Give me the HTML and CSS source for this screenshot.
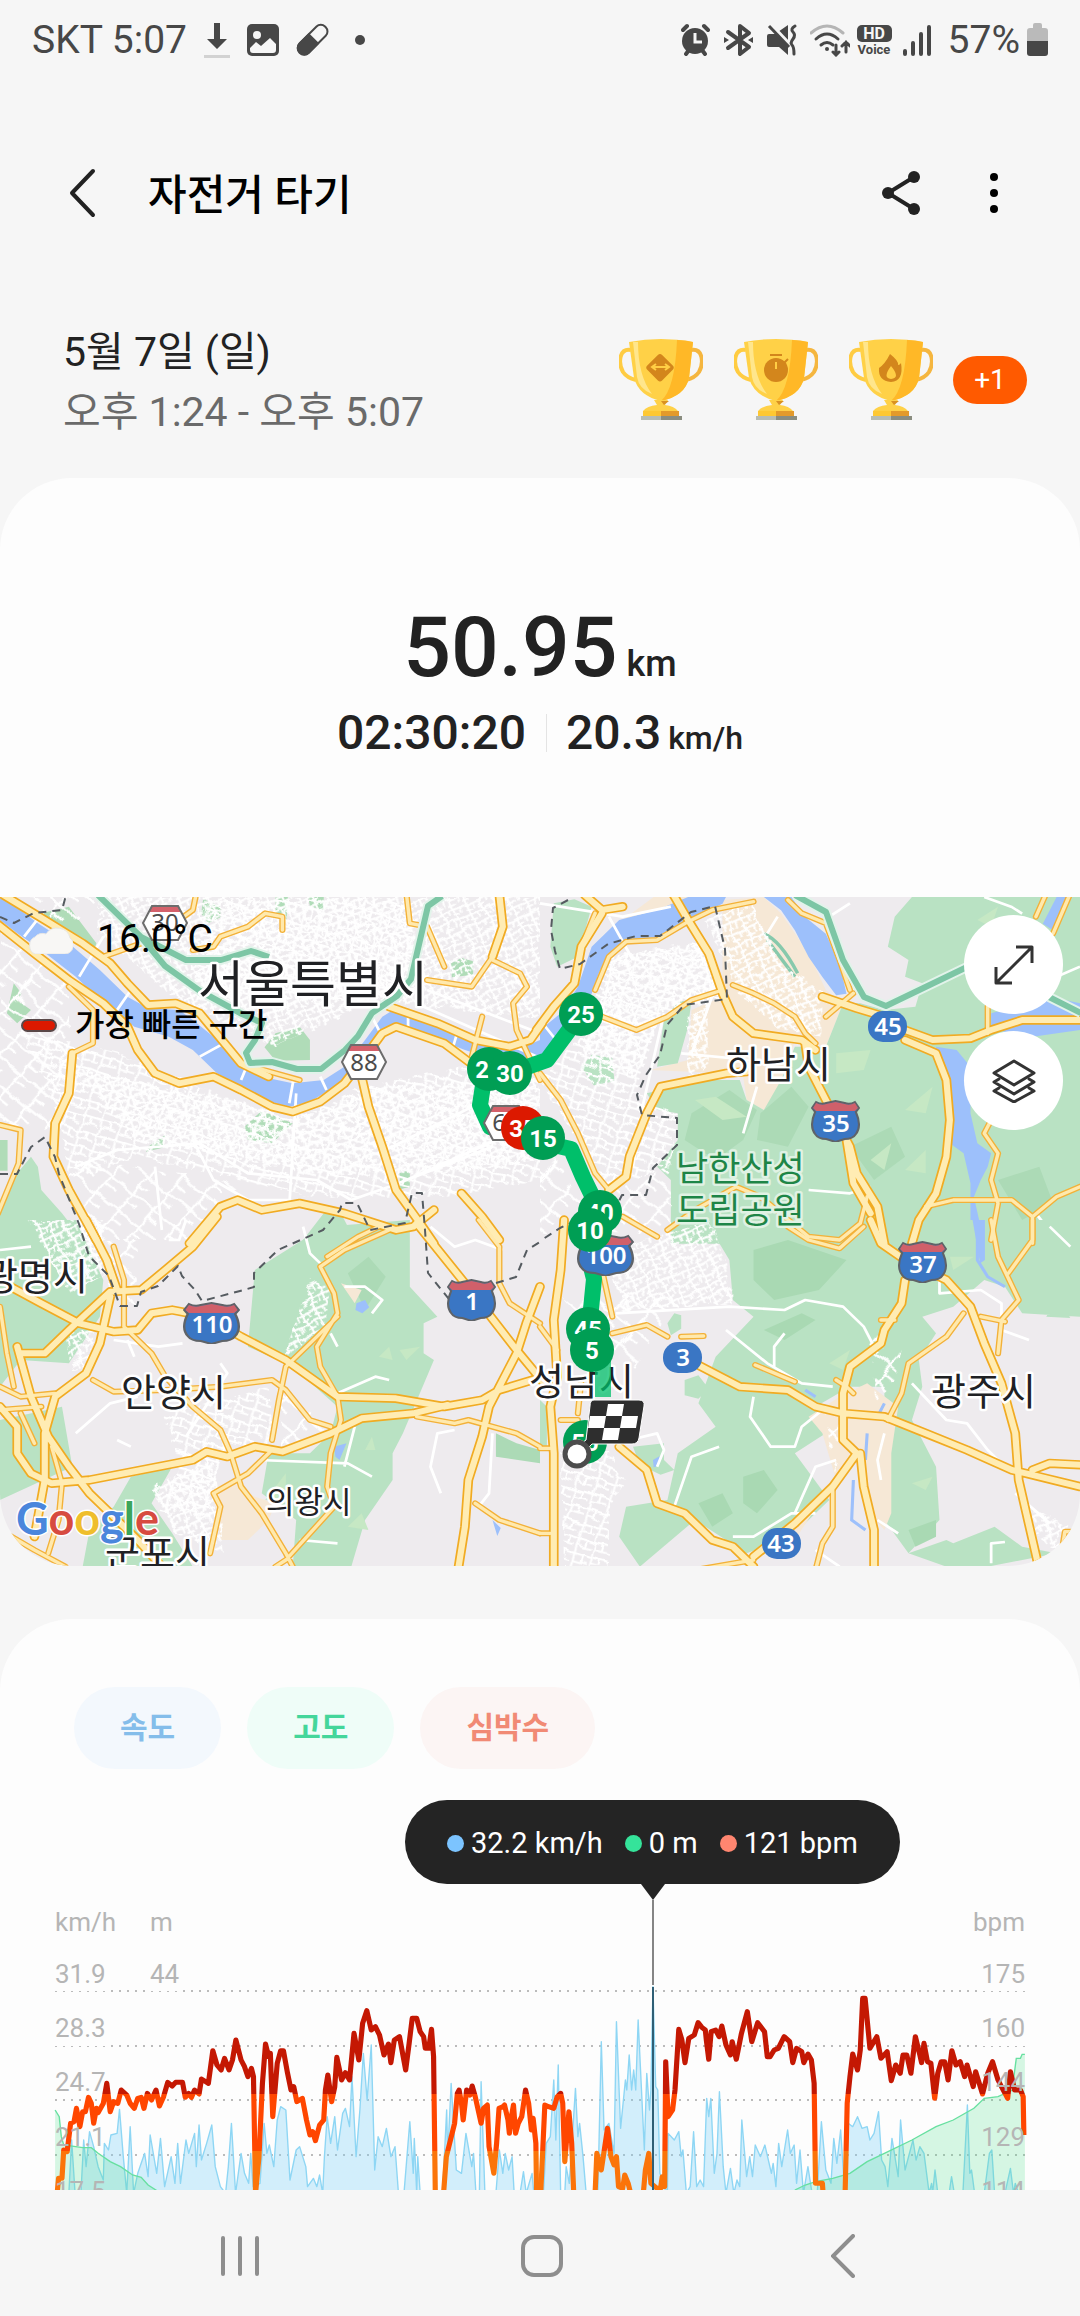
FILE: index.html
```html
<!DOCTYPE html>
<html lang="ko">
<head>
<meta charset="utf-8">
<meta name="viewport" content="width=device-width, initial-scale=1">
<title>자전거 타기</title>
<link rel="stylesheet" href="styles.css">
</head>
<body>
<div class="statusbar">
  <div class="status-group status-left">
    <span>SKT 5:07</span>
    <svg width="26" height="36" viewBox="0 0 26 36"><path d="M10 1h6v16h7L13 27 3 17h7z" fill="#474747"/><path d="M0 33h26v3H0z" fill="#d2d2d2"/></svg>
    <svg width="32" height="32" viewBox="0 0 32 32"><rect width="32" height="32" rx="5" fill="#474747"/><circle cx="10" cy="11" r="4" fill="#f6f6f6"/><path d="M3 24l6-6 5 4 9-8 6 6v6q0 3-3 3H6q-3 0-3-3z" fill="#f6f6f6"/></svg>
    <svg width="34" height="34" viewBox="0 0 34 34"><g transform="rotate(45 17 17)"><rect x="10" y="-1" width="13" height="36" rx="6" fill="none" stroke="#474747" stroke-width="2"/><path d="M9 15h15v14a7 7 0 0 1-15 0z" fill="#474747"/></g></svg>
    <svg class="more-dot" width="10" height="10" viewBox="0 0 10 10"><circle cx="5" cy="5" r="5" fill="#474747"/></svg>
  </div>
  <div class="status-group status-right">
    <svg width="36" height="34" viewBox="0 0 36 34"><g fill="none" stroke="#474747" stroke-width="4" stroke-linecap="round"><path d="M2 7l4-4M27 7l-4-4M5 31l3-4M24 31l-3-4"/></g><circle cx="14" cy="18" r="13" fill="#474747"/><path d="M14 10v9h7" fill="none" stroke="#f6f6f6" stroke-width="3"/></svg>
    <svg width="36" height="34" viewBox="0 0 36 34"><path d="M4 9l21 15-9 7V3l9 7L4 25" fill="none" stroke="#474747" stroke-width="4" stroke-linejoin="round" stroke-linecap="round"/><path d="M0 14l5 3-5 3zM29 14l-5 3 5 3z" fill="#474747"/></svg>
    <svg width="36" height="34" viewBox="0 0 36 34"><path d="M0 13q0-2 2-2h6L21 2v30l-9-8H2q-2 0-2-2z" fill="#474747"/><path d="M4 2l20 21" stroke="#f6f6f6" stroke-width="4"/><path d="M2 3l20 21" stroke="#474747" stroke-width="3"/><path d="M28 3q-5 3-2 6t0 7-1 6 2 9" fill="none" stroke="#474747" stroke-width="3" stroke-linecap="round"/></svg>
    <svg width="40" height="34" viewBox="0 0 40 34"><g fill="none" stroke="#474747" stroke-width="3" stroke-linecap="round"><path d="M1 10q16-14 32 0" stroke="#b5b5b5"/><path d="M6 16q11-10 22 0M11 22q6-5 12 0"/><path d="M26 22v10m-3-3l3 3 3-3M36 29V19m-4 4l4-4 4 4"/></g><circle cx="17" cy="26" r="2" fill="#474747"/></svg>
    <svg width="35" height="34" viewBox="0 0 35 34"><rect y="2" width="35" height="17" rx="5" fill="#474747"/><text class="hd" x="17" y="16">HD</text><text class="voice" x="17" y="31">Voice</text></svg>
    <svg width="42" height="34" viewBox="0 0 42 34"><path d="M6 28v3M14 20v11M22 11v20M30 4v27" stroke="#474747" stroke-width="4" stroke-linecap="round"/></svg>
    <span>57%</span>
    <svg width="21" height="34" viewBox="0 0 21 34"><path d="M6 2q0-2 2-2h5q2 0 2 2v3h3q3 0 3 3v10H0V8q0-3 3-3h3z" fill="#bababa"/><path d="M0 18h21v12q0 3-3 3H3q-3 0-3-3z" fill="#474747"/></svg>
  </div>
</div>

<header class="appbar">
  <button class="icon-btn back" aria-label="뒤로"><svg width="28" height="50" viewBox="0 0 28 50"><path d="M25 3L4 25l21 22" fill="none" stroke="#222" stroke-width="4" stroke-linecap="round" stroke-linejoin="round"/></svg></button>
  <h1>자전거 타기</h1>
  <button class="icon-btn" aria-label="공유"><svg width="38" height="44" viewBox="0 0 38 44"><path d="M32 6L6 22l26 16" fill="none" stroke="#222" stroke-width="4"/><g fill="#222"><circle cx="32" cy="6" r="6"/><circle cx="6" cy="22" r="6"/><circle cx="32" cy="38" r="6"/></g></svg></button>
  <button class="icon-btn" aria-label="더보기"><svg width="8" height="44" viewBox="0 0 8 44"><circle cx="4" cy="6" r="4"/><circle cx="4" cy="22" r="4"/><circle cx="4" cy="38" r="4"/></svg></button>
</header>

<svg class="defs" width="0" height="0" aria-hidden="true">
  <defs>
    <symbol id="cup" viewBox="0 0 84 82">
      <g fill="none" stroke="#ffcc42" stroke-width="4"><path d="M12 11C0 9-1 24 4 33q4 6 13 8"/><path d="M72 11c12-2 13 13 8 22q-4 6-13 8" stroke="#f5b63f"/></g>
      <path d="M10 3q32-6 64 0l-4 36q-4 18-28 23Q20 57 15 39z" fill="#ffd147"/>
      <path d="M58 1q9 0 16 2l-4 36q-4 18-28 23 14-12 16-61z" fill="#ffb827"/>
      <path d="M14 3h5q0 34 14 52Q20 50 18 38z" fill="#ffe68c"/>
      <path d="M35 61h14l-3 5q9 1 13 6H24q4-5 14-6z" fill="#ffd147"/><path d="M42 62h8l-5 4z" fill="#d99122"/>
      <path d="M24 72h18v5H24z" fill="#ffc832"/><path d="M42 72h18v5H42z" fill="#e39a2b"/>
      <path d="M22 77h20v4H22z" fill="#b8bdb4"/><path d="M42 77h21v4H42z" fill="#8a8d80"/>
    </symbol>
    <symbol id="hex" viewBox="0 0 46 36">
      <path d="M10 1h26l9 17-9 17H10L1 18z" fill="#fff"/><path d="M10 1h26l3 6H7z" fill="#d4616b"/>
      <path d="M10 1h26l9 17-9 17H10L1 18z" fill="none" stroke="#6c6c6c" stroke-width="2"/>
    </symbol>
    <symbol id="interstate" viewBox="0 0 48 42" preserveAspectRatio="none">
      <path d="M5 2q5 3 10 1l9-2 9 2q5 2 10-1l4 6-3 4q6 14 0 22-3 5-11 5l-9 3-9-3q-8 0-11-5-6-8 0-22L1 8z" fill="#3a76c4" stroke="#5f6368" stroke-width="2"/>
      <path d="M5 3q5 3 10 1l9-2 9 2q5 2 10-1l3 5-3 3H5L2 8z" fill="#d0606a"/>
    </symbol>
    <pattern id="grid1" width="40" height="34" patternUnits="userSpaceOnUse" patternTransform="rotate(-24)"><path d="M0 4h40M8 0v34M0 22h22M30 4v18" stroke="#fff" stroke-width="6" fill="none"/></pattern>
    <pattern id="grid2" width="54" height="46" patternUnits="userSpaceOnUse" patternTransform="rotate(17)"><path d="M0 6h54M10 0v46M10 28h44M34 6v22" stroke="#fff" stroke-width="6" fill="none"/></pattern>
    <pattern id="grid3" width="80" height="66" patternUnits="userSpaceOnUse" patternTransform="rotate(40)"><path d="M0 10h80M20 0v66M20 40h34" stroke="#fff" stroke-width="7" fill="none"/></pattern>
    <filter id="wobble" x="0" y="0" width="100%" height="100%"><feTurbulence type="fractalNoise" baseFrequency="0.02" numOctaves="2" seed="4"/><feDisplacementMap in="SourceGraphic" scale="26" xChannelSelector="R" yChannelSelector="G"/></filter>
    <linearGradient id="zones" gradientUnits="userSpaceOnUse" x1="0" y1="0" x2="0" y2="900">
      <stop offset="68%" stop-color="#c41803"/><stop offset="68%" stop-color="#ff4600"/><stop offset="87%" stop-color="#ff4600"/><stop offset="87%" stop-color="#fb7409"/>
    </linearGradient>
  </defs>
</svg>

<main>
<section class="summary">
  <div class="when"><p>5월 7일 (일)</p><p class="range">오후 1:24 - 오후 5:07</p></div>
  <div class="awards">
    <svg width="84" height="82" viewBox="0 0 84 82"><use href="#cup"/><g fill="#d3861c"><rect x="31" y="18" width="21" height="21" rx="3" transform="rotate(45 41 28)"/></g><path d="M33 28h17M37 25l-4 3 4 3M46 25l4 3-4 3" fill="none" stroke="#ffce45" stroke-width="2"/></svg>
    <svg width="84" height="82" viewBox="0 0 84 82"><use href="#cup"/><circle cx="42" cy="31" r="12" fill="#d3861c"/><path d="M36 16h12M50 24l4-4" stroke="#d3861c" stroke-width="2"/><path d="M42 23v7" stroke="#ffce45" stroke-width="2"/></svg>
    <svg width="84" height="82" viewBox="0 0 84 82"><use href="#cup"/><path d="M41 15q9 7 8 11 2 0 3-2 3 18-10 19-13-1-12-14 6-4 11-14z" fill="#d3861c"/><path d="M42 27q10 12 0 13-9-1 0-13z" fill="#ffce45"/></svg>
    <span class="plus">+1</span>
  </div>
</section>

<section class="totals">
  <p class="distance">50.95<span class="unit">km</span></p>
  <div class="pace"><p>02:30:20</p><p class="speed">20.3<span class="unit">km/h</span></p></div>
</section>

<section class="map">
<svg class="map-art" viewBox="0 0 1080 669" role="img" aria-label="경로 지도">
  <rect width="1080" height="669" fill="#eeebee"/>
  <!-- terrain, north west -->
  <svg class="tile" x="0" y="-17" width="540" height="360" viewBox="0 0 1568 1080" preserveAspectRatio="none">
    <g fill="#b0dcb8"><path d="M800 460l70-20 30 40v60l-100 2-32-40zM710 740l50-48 90 38-60 60-70-10zM590 56l50 24v32l-36 18-20-30zM800 51h36l-4 70-32-8zM895 51h45v40l-40-12zM40 310l22 30-10 22 38 28-40 40-30-30zM430 800l50-35-8 38-48 12zM1160 880l30-10v50l-28 8zM1310 250l30-16 34 10v40l-62 8zM120 100l80-20 80 110-10 30zM0 780h22v92H0z"/></g>
    <path d="M50 880l40-50 20 30 10 70 60 70 60 80H0v-80zM940 1000h50l40 80H880z" fill="#b9e2c3"/>
    <path d="M0 51l20 9 90 70 90 60 90 80 80 80 60 35 90 5 40 30 60 50 40 50 30 35 70 35 90 20 90-10 60-40 60-80 50-70 40-25 100 45 120 50 130 30 68-30v60l-68 20-150-50-100-40-110-30-50 50-50 70-50 50-90 55-60 15-80-20-60-40-70-40-70-70-70-40-100-30-90-70-80-80-100-80-70-50-50-40z" fill="#9dc0fb"/>
    <g filter="url(#wobble)"><path d="M60 450l290 70 300 130 200 70 200-100 300-60 218 40v300l-268 50H900L400 830l-200 70-30-200z" fill="url(#grid2)"/><path d="M200 560l450 100 200 60 250-100 460-20v240l-260 40H900L400 780z" fill="url(#grid1)"/><path d="M290 51h1278v370l-468-60-300 140-280-140-240-200z" fill="url(#grid1)"/><path d="M0 140l200 160v340l-50 110-150-10zM290 51h-200l100 100zM200 830l500 80-60 60-100 110H280z" fill="url(#grid3)"/><path d="M600 60h600v300H560z" fill="url(#grid2)"/></g>
    <g class="street"><path d="M220 860l120-50 240-20 140 90 200 20 100 60 110-40 300-120M560 780l60 120 100 60 120 0M860 640l-20 340M1100 820l330-170M1180 900l370-170M450 860l20 190M70 170l60-80M230 290l70-120M340 390l40-60M580 530l70-40M700 600l20-50M840 670l12-70M930 590l18 40M1080 410l30 60M1185 400v50M1330 450l-20 70M1240 330l328 130M1230 380l330 150"/></g>
  </svg>
  <!-- terrain, north east -->
  <svg class="tile" x="540" y="-17" width="540" height="360" viewBox="0 0 1568 1080" preserveAspectRatio="none">
    <path d="M530 60l120-8 50 48 80 120 50 110 50 40-50 130-90-20-40 140-50 70-50-30-10-70-50-10-220-10 110-30 10-150 90-40zM240 120L330 51h130l-60 50z" fill="#f6e8d6"/>
    <path d="M40 70l60-12 50 22-40 150-60 30-20-60zM340 560l20-140 40-55 40-5-10 80-30 110zM120 560l30-36 60 10 6 70-60 12zM1080 51h488v1040H380V900l-40-40 60-80v-80l-60-10-30-50 160-40h110l20 60 50 30 50-90 40-100 90 0 50-130 50 0 70 20 90-10 20-70-50-20 10-50-60-40 20-90z" fill="#b9e2c3"/>
    <path d="M440 700l110-70 80 60-40 90-80 60-90-60zM640 700l90-80 50 60-60 120-90-20zM900 800l120-60 40 90-90 70zM1330 900l120-40 40 110-90 50z" fill="#acdab6"/>
    <path d="M860 520l100-10-20 60-80 10zM1060 690l80-70-20 80zM1270 120l60-40-20 60zM960 840l60-50-20 80zM450 660l60-10 90 60-70 10zM1060 870l60-60v70z" fill="#c6e8c4"/>
    <g fill="#9dc0fb"><path d="M0 530v-80l60-50 50-80 20-60 20-60 80-80 110-30 90-39h110l-10 20-100 50-90 50-90 10-50 40-30 60-20 60-30 80-60 80-60 60zM650 51h80l40 60 60 50 40 90 20 90-30 5-40-55-40-60-40-80-40-60zM1150 500l60 10 40 50v140l20 90 40 30-10 40-20 40-20 50 30 140h-40V910l-20-90-40-30 10-90-10-80-40-80zM1310 400l170-50 88 20v80l-168 25-90-35zM1500 51h30l-40 100-30-20z"/></g>
    <path d="M648 160q50 20 100 120M660 180l80 110" fill="none" stroke="#87c9ac" stroke-width="10"/>
    <g filter="url(#wobble)"><path d="M200 230l280-50 60 170-190 50-70 240 120 60-20 160-180 60L0 600l120-130z" fill="url(#grid2)"/><path d="M210 230l270-40 60 150-190 60-70 200-160-80z" fill="url(#grid1)"/><path d="M480 120l130-50 90 180 120 90 0 130-120-20-120-110zM430 420l60-60 0 200-60 40z" fill="url(#grid1)"/><path d="M0 760l120 200 260-100v200H0z" fill="url(#grid3)"/></g>
    <g class="street"><path d="M0 70l240 40 140-30M200 110l70 130M630 620l-40 140M780 930l120 10 60-20M660 160l30-50M270 860l30-190 60-270M0 420l70 90M1290 51l80 30 30 20M1500 290l68-30M900 70l-60 40M1440 1000l60 80M410 520l200 20M440 520l70-200"/></g>
  </svg>
  <!-- terrain, south west -->
  <svg class="tile" x="0" y="323" width="540" height="360" viewBox="0 0 1568 1080" preserveAspectRatio="none">
    <path d="M0 0h220l80 180-10 110-90 140-140-10-60 80zM0 600l180-40 30 180-210 100zM740 150L940 20 1190 0v200l80 90-40 20v90l30 20-90 220-30 60v80l-80 120-40 140H850l10-140-100-80 20-120h120l60-60 20-80-130-120-130-60zM240 1040l20-110 70-70 50-90 120-30-60 110 60 90 60 100z" fill="#b9e2c3"/>
    <path d="M1010 160l60-50 50 60-60 100zM1440 640l60 30 68 20v40l-128-20z" fill="#acdab6"/><path d="M1100 410l30-30 10 40zM1160 390l60-10-40 40zM1060 690l20-40 10 40zM770 840l60-80v90zM1010 920l40-40 20 50z" fill="#c6e8c4"/>
    <path d="M620 830l60-40 60 40 60 20-20 50-60 60h-80zM990 190l60 20-20 40z" fill="#f6e8d6"/><path d="M1035 250l25-10 12 22-20 18-20-10zM970 680l36-10-20 50-12-10zM1430 900l24 24-10 24z" fill="#9dc0fb"/>
    <g filter="url(#wobble)"><path d="M480 580l300-80 20 160-160 60-40 180-140-30 60-120z" fill="url(#grid2)"/><path d="M80 0h220l10 160-110 60zM180 340l90-10-10 110-50 10zM900 180l60 20-20 120-120 100z" fill="url(#grid1)"/><path d="M440 800l180-80 30 280-140-60z" fill="url(#grid1)"/><path d="M800 500l160 120-140 60zM300 60h100v200l-80-40z" fill="url(#grid3)"/></g>
    <g class="street"><path d="M0 90l90-10M330 360l130 20 70-10M370 360l20 50M220 640l100-90 80-20M340 660l40 20M750 720l260 10 70 40M1000 740l30-120M980 520l110-50 40 10M870 960l110 10M1280 820l-30-80 20-100 50-10M1250 20l70 60 60-20 80 30M640 430l20 30-120 190M960 340l20 40M1430 640l-10 180-30 40M490 60l30 0 20-60M1000 200l60 0 50 40-30 40M880 20l20 80 40 40"/></g>
  </svg>
  <!-- terrain, south east -->
  <svg class="tile" x="540" y="323" width="540" height="360" viewBox="0 0 1568 1080" preserveAspectRatio="none">
    <path d="M480 0h1088v290l-168-10-50-80-60-20-90 80-90 30 40 50-50 80 10 80-30 100 70 140 10 160-90 100-70-100V500H900l-100 60 30 80-90 60 100 140-110 110-130 50-150-100-160 140-60-90 20-90 120-20 30-140 110-80-50-70 50-140 110-120-60-50-10-120zM1070 1000l110-40 20 10 120-50 80 60 100 20-200 40h-120zM1470 290l30-56 40 60zM0 540l20 20v120H0zM370 310l20-30 20 6v40l-30 20zM420 480l40-14 30 40-30 30-40-10zM270 680l90-10v50l30 30-40 14-60-30z" fill="#b9e2c3"/>
    <path d="M620 90l100-30 170 60-80 90-130 30-60-60zM590 770l60-20 40 60-60 70-40-30zM460 850l70-30 30 60-60 40zM650 330l110-50 40 20-90 60zM1070 930l80-30v50l-60 30z" fill="#a9d9b3"/>
    <path d="M840 430l60-40-20 60zM1080 790l60-20-20 40zM1190 110l70 0-60 40z" fill="#c6e8c4"/>
    <path d="M950 490l90 70-20 140v180l-20 50-60-70-20-140-40 20-140 220-40-30 160-150-40-140-40-50 90-60z" fill="#f6e8d6"/>
    <path d="M1270 0l0 120 30 50 50 30M1000 550l-20 40M950 640l-5 80M910 780l-5 120 40 30M770 510l30 20" fill="none" stroke="#9dc0fb" stroke-width="9"/><path d="M1256 0h36v120l-14 10zM328 720l20-12-4 30-14 4z" fill="#9dc0fb"/>
    <g filter="url(#wobble)"><path d="M200 90L490 0l50 130 20 120-320 20z" fill="url(#grid1)"/><path d="M60 700l140-10 50 100-50 80v170H70z" fill="url(#grid2)"/><path d="M60 230l400 0-100 60-80 160-100-80zM960 330l90 60-20 100-60 60zM820 560l60 20-20 180z" fill="url(#grid3)"/><path d="M1420 860l120 60-40 80-60-60z" fill="url(#grid1)"/></g>
    <g class="street"><path d="M220 280l330-20 160 10 60-30 110 20 60 60 40 80M540 330l120 100 100 60 90 10M680 440l0-60 30-40M620 530l-10 60 60 90h70l20-60 60-50M390 860l30-90 20-60 80-30M560 950l60 0 110-70h70M740 880l60-140 60-20M1000 640l-20 80 10 60M1080 490l100 110 60 10 60 80 40 40M1160 180l0 40 120-10 60 40v80l80 30M1480 20l60 60M1310 1030l0-60 40-4M1380 820l100 90M980 900l60 40M260 660l80-20 20 50-20 50M800 990l70 50"/></g>
  </svg>

  <!-- roads -->
  <defs>
    <g id="thin">
      <svg class="tile" x="0" y="-17" width="540" height="360" viewBox="0 0 1568 1080" preserveAspectRatio="none"><path d="M300 230l110-40 70-40 80-60 10-50M560 210l60-10 20-30 80-30 50-40 50 10v40M1180 40l10 90 50 10 50 120M1430 240l80 40 20 40-40 50 10 80 68 150M1400 410l-30 120M0 735l60 15-6 100-60 150M200 320l70 70v100l-60 30M700 550l80 24 90 26M1240 300l130 20 60-90"/></svg>
      <svg class="tile" x="540" y="-17" width="540" height="360" viewBox="0 0 1568 1080" preserveAspectRatio="none"><path d="M620 65L500 90l-70 35-90 55-90 5-50 45-40 100M180 410l100 40 90-40 70-50 90-30M560 315l60 25 60 30 60 40 30 50 30 30M830 410l80-70M1310 720l-20 40 40 60-20 80 20 70-20 110M720 60l40 40 70 30 40 110 30 90M1470 40l-30 70M1540 40l-50 120M1300 460v-80M370 1050l80-60 120-70 70 30 140 120 90 10 60-50 20-80M240 1010l100 60M1430 1010v80M0 580l60 80 50 100 50 120 40 50M1120 980l80-20h170l60 50 70-60 68-30M160 100l-40 100-20 110"/></svg>
      <svg class="tile" x="0" y="323" width="540" height="360" viewBox="0 0 1568 1080" preserveAspectRatio="none"><path d="M360 320l80 80 40 70 80 90 80 70 30 70 30 100 60 80 70 120 20 40M270 480l60 35 150-5 160-10 150-20 40 30 70 90 60 20M1130 30l-130 60-70 50 40 80 10 60-60 100 10 60 50 90 10 70-30 100-10 100 20 60-140 160-30 20M1100 20l-60 30-90 60M980 290l-80 80-70 70-20 100-20 120M1390 0l60 80v110l30 60 88 60M1210 590l110 20 40-10 140 40 68 40M1380 850l70 50 118 40M790 690l-70 70-100 60 20 40-30 140M0 260l20 140 20 100M0 500l60 30 100-10M180 790l-10 110-30 100M0 570l120-10M60 580l40 90M330 80l30 100 0 140M150 680l30 110M0 930l100 60 90 50"/></svg>
      <svg class="tile" x="540" y="323" width="540" height="360" viewBox="0 0 1568 1080" preserveAspectRatio="none"><path d="M1230 280l-50 70-110 80-20 90-40 80M850 800v120l-30 50-20 80M625 435l115 50M210 340l100-25 60 35M410 350l65-2M1310 0l20 110 60 130-50 60-10 100M1430 0v60l-70 100M1280 290l70 15M1100 0l-15 60M720 20l60 40 90 25 70-65M180 150l30 140M0 320l50 70M0 685h30M0 940h30M1560 935l-36 0-6 40M450 1050l170-30M860 480l30 20 20 20M990 300h40M120 480l-10 100M60 600l50 0"/></svg>
    </g>
    <g id="thick">
      <svg class="tile" x="0" y="-17" width="540" height="360" viewBox="0 0 1568 1080" preserveAspectRatio="none"><path d="M10 45l120 75 110 70 80 60 50 60 60 65 80-5 70 30 40 50 40 50 40 50 80 40M-10 130l110 90 100 80 100 70 70 70 30 70 50 70 70 30 100-20 80 40 90 50 60 15 80-30 70-55 60-80 50-70 40-20 140 50 90 70M1130 380l140 50 110 50 100 20 60-20 34-50M210 520l-10 120-40 90-5 100 45 100 80 150M1050 590l20 90 40 120 40 130 70 100 40 60M550 1090l90-110 50-20 70 30 110-20 130 30 150 50 50-10 60-50M1450 45l10 95-30 90M1340 940l60 70 50 70"/></svg>
      <svg class="tile" x="540" y="-17" width="540" height="360" viewBox="0 0 1568 1080" preserveAspectRatio="none"><path d="M385 40l45 80 60 100 40 120 30 70 60 50 70 10 70 10 40 30M770 490l10 70 40 80 40 80 40 80 20 80 60 100 20 110M890 780l20 130 50 90M600 575l-60 5-190 40-40 80-50 130-10 60-50 40M180 100l-60 100-20 110-60 70-50 70M130 45l50 45 60-10M820 350l100 35 80 25 60 40 80 30 110-5 60-25 90-30h178M1060 480l90 40 30 80 10 120-10 110-30 110-50 80-20 70"/></svg>
      <svg class="tile" x="0" y="323" width="540" height="360" viewBox="0 0 1568 1080" preserveAspectRatio="none"><path d="M30 200l90 50 110 60 100 25 70-5 40-50 60-10 100 20 100 60 130 70 150 110 170 5 140 25 110-20 50-30 128-40M60 400h70l70-70 120-115 90-5 70-60 80-70 70-90M50 380l40 150 50 120 60 90 60 80 140 140 70 80M320 230l-30 140-40 90-90 70-30 110v140l-30 170M0 560l50 60v80l40 60 60 30 110-10 300-60 40-25 60 15 80-30 80 15 140-55 90-45 150-15 100-25M250 0l60 120 30 90M1210 10l140 180 150 200 80 100M1568 200l-40 110-28 90-80 160-20 90-40 130-10 140-20 130"/></svg>
      <svg class="tile" x="540" y="323" width="540" height="360" viewBox="0 0 1568 1080" preserveAspectRatio="none"><path d="M960 0l30 70 70 50 120 60 70 80 40 110 50 120 40 150 10 140 60 270M70 0L60 150 40 300l10 170-20 90 10 140v350M450 430l130 70 140 10 80 50 80 20 120 10 120 50 120 50 130 60 80 20 118 30M1430 750l50-20 98 5M1060 180l-10 70-50 80-10 40-90 70-20 80v140l40 40-70 100-110 110-120 100M930 700l10 100 30 130v120M230 680l80 70 30 100 80 30 80 80 60 20 60 60"/></svg>
    </g>
  </defs>
  <use href="#thin" stroke="#f3b138" stroke-width="18"/><use href="#thick" stroke="#f1ab22" stroke-width="28"/>
  <use href="#thin" stroke="#ffe9ad" stroke-width="10"/><use href="#thick" stroke="#ffecb3" stroke-width="18"/>
  <!-- riverside expressways -->
  <g fill="none" stroke-linejoin="round">
    <path d="M98-2l43 42 24 29 35 25 42 23 20 9-7 17-9 13 4 10 22-1 25 7h24l24-19 13-14 14-23 25-17 14-17 6-26 11-47 14-10M141 40l45 23h35l30-9 18 6M795-2l31 17 17 48 21 37 22 9 81-39M1049 100l32 16" stroke="#e2f3ea" stroke-width="10"/>
    <path d="M98-2l43 42 24 29 35 25 42 23 20 9-7 17-9 13 4 10 22-1 25 7h24l24-19 13-14 14-23 25-17 14-17 6-26 11-47 14-10M141 40l45 23h35l30-9 18 6M795-2l31 17 17 48 21 37 22 9 81-39M1049 100l32 16" stroke="#7dc6a5" stroke-width="6"/>
    <path d="M0 20l14 6 20-10 28-3 4-15M0 277l17 0 14-27 14-10 10 20 4 17 20 50 10 32 20 20 11 30 17 0 4-14 17-6 20-20 4 10 13 14 7 11 38-10 14-4v-14l24-23 45-20 17-20 2-7h15l13 27 35-7 7-30h10l3 37 3 43 24 30 11 2M496 386l20-6 11-27 13-8M568 3l-15 8-2 22 4 21 5 18 20-5 28-20 28-8h24l31-24 24-6 10 43 2 50-43 6-17 20-7 30-14 20-9 20 5 20 35 3v27l-24 23-7 27h-24l-3 6-59 27-20 13" stroke="#555b60" stroke-width="2" stroke-dasharray="8 6"/>
  </g>

  <!-- place names -->
  <g class="place">
    <text x="198" y="105" font-size="50">서울특별시</text>
    <text x="726" y="181" font-size="38">하남시</text>
    <text x="-17" y="393" font-size="38">광명시</text>
    <text x="121" y="509" font-size="38">안양시</text>
    <text x="266" y="616" font-size="31">의왕시</text>
    <text x="105" y="670" font-size="38">군포시</text>
    <text x="529" y="498" font-size="38">성남시</text>
    <text x="931" y="508" font-size="38">광주시</text>
    <g class="park"><text x="676" y="284" font-size="35">남한산성</text><text x="676" y="326" font-size="35">도립공원</text></g>
  </g>

  <!-- ride route -->
  <g fill="none" stroke="#00bf6a" stroke-width="16" stroke-linejoin="round" stroke-linecap="round">
    <path d="M581 117l-34 46-37 13M484 182l-4 26 10 22M545 246l26 6 12 28 17 35M589 362l5 20-4 40"/>
    <path d="M603 460v40" opacity=".75" stroke-linecap="butt"/>
  </g>
  <!-- road shields -->
  <g class="shield">
    <use href="#hex" x="142" y="8" width="46" height="36"/><text class="on-hex" x="165" y="34">30</text>
    <use href="#hex" x="341" y="147" width="46" height="36"/><text class="on-hex" x="364" y="174">88</text>
    <use href="#hex" x="483" y="208" width="46" height="36"/><text class="on-hex" x="506" y="234">60</text>
    <use href="#interstate" x="811" y="203" width="49" height="42"/><text x="836" y="235">35</text>
    <use href="#interstate" x="577" y="337" width="57" height="42"/><text x="606" y="367">100</text>
    <use href="#interstate" x="898" y="344" width="49" height="42"/><text x="923" y="376">37</text>
    <use href="#interstate" x="447" y="382" width="49" height="42"/><text x="472" y="413">1</text>
    <use href="#interstate" x="183" y="405" width="57" height="42"/><text x="212" y="436">110</text>
    <rect x="868" y="114" width="39" height="31" rx="15"/><text x="888" y="138">45</text>
    <rect x="663" y="445" width="39" height="31" rx="15"/><text x="683" y="469">3</text>
    <rect x="762" y="631" width="39" height="31" rx="15"/><text x="781" y="655">43</text>
  </g>
  <!-- distance markers -->
  <g class="marker">
    <circle cx="581" cy="117" r="22"/><text x="581" y="126">25</text>
    <circle cx="489" cy="172" r="22"/><text x="489" y="181">20</text>
    <circle cx="510" cy="176" r="22"/><text x="510" y="185">30</text>
    <circle class="fast" cx="523" cy="231" r="22"/><text x="523" y="240">35</text>
    <circle cx="543" cy="241" r="22"/><text x="543" y="250">15</text>
    <circle cx="600" cy="315" r="22"/><text x="600" y="324">40</text>
    <circle cx="590" cy="333" r="22"/><text x="590" y="342">10</text>
    <circle cx="588" cy="432" r="22"/><text x="588" y="441">45</text>
    <circle cx="592" cy="453" r="22"/><text x="592" y="462">5</text>
    <circle cx="585" cy="545" r="22"/><text x="585" y="554">50</text>
  </g>
  <path d="M594 503h45q6 0 5 6l-5 32q-1 6-7 6h-40l-12 12-5-8 11-8 4-34q0-6 4-6z" fill="#2e2e2e" stroke="#fff" stroke-width="1"/>
  <path d="M608 507h16l-2 12h-16zM590 519h16l-2 12h-16zM622 519h16l-2 12h-16zM604 531h16l-2 12h-16z" fill="#fff"/>
  <circle cx="577" cy="557" r="12" fill="#fff" stroke="#4c4c4c" stroke-width="5"/>
  <text class="google" x="16" y="638"><tspan fill="#4a86dc">G</tspan><tspan fill="#d74b40">o</tspan><tspan fill="#efbe2c">o</tspan><tspan fill="#4a86dc">g</tspan><tspan fill="#3ba55a">l</tspan><tspan fill="#d74b40">e</tspan></text>
</svg>
  <div class="legend">
    <p class="weather"><svg width="46" height="30" viewBox="0 0 46 30"><path d="M8 30a8 9 0 0 1 0-17 9 8 0 0 1 11-3 13 12 0 0 1 24 4 9 9 0 0 1-5 16z" fill="#f8f7f5" stroke="#e6e6e6"/></svg>16.0°C</p>
    <p class="fastest"><i class="swatch"></i>가장 빠른 구간</p>
  </div>
  <div class="map-tools">
    <button aria-label="지도 확대"><svg width="40" height="40" viewBox="0 0 40 40"><path d="M2 38L38 2M22 2h16v16M18 38H2V22" fill="none" stroke="#333" stroke-width="3" stroke-linejoin="round"/></svg></button>
    <button aria-label="지도 레이어"><svg width="44" height="44" viewBox="0 0 44 44"><g fill="none" stroke="#333" stroke-width="3" stroke-linejoin="round" stroke-linecap="round"><path d="M22 2l20 12-20 12L2 14z"/><path d="M7 20l-5 3 20 12 20-12-5-3M7 29l-5 3 20 11 20-11-5-3"/></g></svg></button>
  </div>
</section>

<section class="charts">
  <div class="chips"><button class="chip speed-chip">속도</button><button class="chip alt-chip">고도</button><button class="chip hr-chip">심박수</button></div>
  <div class="plot">
    <svg class="plot-art" viewBox="0 0 1080 390" role="img" aria-label="속도, 고도, 심박수 그래프">
      <path class="dots" d="M55 191h970M55 246h970M55 300h970M55 355h970"/>
      <path d="M55 188h51v3H55zM151 188h30v3h-30zM980 188h45v3h-45zM55 243h51v3H55zM980 243h45v3h-45z" fill="#fdfdfd"/>
      <svg class="tile" x="0" y="90" width="540" height="426" viewBox="0 0 1568 1278" preserveAspectRatio="none">
        <path class="speed-line" d="M200 910L208 750 218 910 235 910 243 750 250 830 260 725 272 770 285 830 300 870 303 760 315 780 322 735 340 730 347 658 358 800 368 910 378 710 388 910 400 850 420 790 430 860 436 735 455 850 466 745 478 890 497 800 508 880 516 760 524 880 540 750 548 790 565 730 570 830 578 705 585 810 600 760 615 705 625 830 640 890 655 910 663 830 672 700 684 910 700 790 710 850 722 880 728 790 735 890 755 880 767 700 775 790 782 765 795 830 805 690 815 650 830 660 842 870 860 780 870 770 888 830 893 890 910 865 920 890 928 855 937 910 942 800 950 680 960 760 972 680 980 780 995 670 1003 655 1015 710 1022 560 1034 800 1045 660 1055 490 1066 630 1078 465 1088 840 1098 740 1110 770 1122 715 1135 800 1147 770 1157 910 1173 910 1190 695 1200 850 1203 745 1210 910 1213 800 1220 910 1285 910 1297 660 1300 800 1310 580 1325 840 1340 850 1353 730 1370 830 1375 790 1382 910 1392 910 1397 575 1408 910 1440 910 1450 780 1460 850 1467 790 1477 840 1487 800 1493 910 1510 910 1520 845 1528 910 1545 850 1550 910"/>
        <path class="alt-area" d="M160 660l12 20 6 60 7 25 55 8h25l20 17 35 25 30 15 35 25 25 7 20 23 30 20H160z"/><path class="alt-line" d="M160 660l12 20 6 60 7 25 55 8h25l20 17 35 25 30 15 35 25 25 7 20 23 30 20"/>
        <path class="hr-line" d="M166 910L170 865 180 865 185 780 195 785 205 700 215 695 222 655 232 710 240 665 248 665 257 622 265 640 272 700 280 655 285 668 300 640 310 580 320 665 330 635 342 640 352 600 368 615 378 640 390 655 400 625 410 622 418 655 428 610 440 630 453 600 463 648 475 620 487 577 500 588 510 577 530 577 538 622 548 610 556 622 565 600 578 612 585 567 605 580 618 482 630 525 642 540 652 505 665 540 675 510 685 450 700 510 710 530 720 560 730 535 736 560 742 910 752 800 762 580 771 462 780 500 785 490 792 680 805 520 815 482 823 482 835 550 845 600 853 590 862 635 878 625 890 690 900 735 908 725 916 752 928 705 940 690 945 600 952 555 963 635 972 590 978 502 992 570 1003 548 1015 570 1028 430 1042 510 1053 400 1065 362 1078 420 1090 410 1102 435 1115 495 1128 462 1135 518 1145 450 1160 440 1178 540 1188 460 1197 385 1210 385 1220 425 1230 440 1235 475 1245 475 1253 418 1259 500 1264 910M1288 910L1296 800 1308 750 1320 700 1328 610 1333 600 1340 640 1345 690 1355 600 1365 615 1371 588 1380 620 1397 700 1404 655 1415 645 1420 770 1434 850 1442 760 1449 655 1460 650 1465 645 1475 690 1479 730 1485 680 1491 645 1497 730 1505 700 1515 680 1526 600 1535 640 1543 720 1548 685 1556 760 1558 910"/>
      </svg>
      <svg class="tile" x="540" y="90" width="540" height="426" viewBox="0 0 1568 1278" preserveAspectRatio="none">
        <path class="speed-line" d="M10 910L18 760 30 740 40 570 46 750 53 525 60 910 72 910 76 830 85 880 103 595 110 740 115 700 125 800 134 910 168 910 178 455 186 720 200 700 215 790 222 395 234 715 248 570 252 600 259 495 266 600 272 540 278 600 285 390 303 780 310 550 318 660 322 600 328 290 336 590 342 600 348 850 370 910 372 730 390 750 403 725 410 800 415 780 425 910 436 890 446 725 455 890 465 870 475 890 484 625 490 680 496 625 506 850 514 790 521 605 532 830 540 910 553 835 563 910 572 870 580 890 586 690 600 860 609 800 617 860 625 765 640 800 653 765 672 850 677 820 685 890 693 760 702 830 719 720 727 790 738 765 745 880 755 780 765 910 778 830 790 910 805 910 817 695 830 840 845 880 853 745 862 820 873 720 885 910 895 700 908 710 922 680 935 715 950 710 958 750 970 730 983 665 992 810 1002 830 1010 890 1022 745 1040 860 1047 690 1060 840 1083 750 1092 810 1103 770 1115 790 1130 910 1137 880 1140 910 1147 840 1155 910 1188 910 1195 860 1203 910 1228 910 1241 645 1248 850 1253 840 1262 910 1290 910 1305 790 1312 780 1320 910 1350 910 1366 835 1375 910 1380 880 1390 910"/>
        <path class="alt-area" d="M740 900l30-15 30-10 50-10 50-15 50-35 50-25 80-40 70-40 50-20 60-35 30-30 40-5 42-20 4-40 7-55h12l5-12h8v407H740z"/><path class="alt-line" d="M740 900l30-15 30-10 50-10 50-15 50-35 50-25 80-40 70-40 50-20 60-35 30-30 40-5 42-20 4-40 7-55h12l5-12h8"/>
        <path class="hr-line" d="M2 910L8 780 14 645 25 650 40 655 50 620 60 610 66 640 72 815 84 665 92 760 98 910M160 910L165 790 178 840 196 715 206 800 215 825 222 800 228 890 240 895 246 855 256 880 262 905M300 910L306 840 316 790 322 880 340 895 350 895 355 860 362 890 365 515 372 680 385 660 392 600 403 418 412 450 421 518 432 445 448 435 459 398 470 412 480 420 483 450 490 508 497 425 510 420 520 440 528 408 540 465 553 495 558 455 570 508 585 430 602 365 615 455 632 398 652 425 660 500 668 500 680 480 692 475 709 440 725 455 734 518 745 475 760 485 766 518 778 492 788 510 796 580 800 880 820 880 822 910M886 910L892 640 900 560 908 492 922 540 930 480 937 325 944 325 958 475 978 440 990 505 1008 485 1020 572 1033 525 1046 550 1054 495 1065 495 1077 550 1090 440 1103 495 1108 518 1115 460 1125 515 1135 520 1146 625 1155 550 1165 515 1175 515 1185 570 1196 482 1208 525 1220 515 1233 560 1240 525 1258 590 1265 545 1285 612 1300 550 1314 515 1330 570 1345 600 1358 625 1366 545 1378 600 1395 600 1403 620 1405 735"/>
      </svg>
      <path d="M653 100v85" stroke="#858585" stroke-width="2"/><path d="M653 187v203" stroke="#2f5f75" stroke-width="2"/>
      <g class="axis">
        <text x="55" y="131">km/h</text><text x="150" y="131">m</text><text class="end" x="1025" y="131">bpm</text>
        <text x="55" y="183">31.9</text><text x="150" y="183">44</text><text class="end" x="1025" y="183">175</text>
        <text x="55" y="237">28.3</text><text class="end" x="1025" y="237">160</text>
        <text x="55" y="291">24.7</text><text class="end" x="1025" y="291">144</text>
        <text x="55" y="346">21.1</text><text class="end" x="1025" y="346">129</text>
        <text x="55" y="400">17.5</text><text class="end" x="1025" y="400">114</text>
      </g>
    </svg>
    <div class="tooltip"><span class="tip-speed">32.2 km/h</span><span class="tip-alt">0 m</span><span class="tip-hr">121 bpm</span></div>
  </div>
</section>
</main>

<nav class="navbar">
  <button aria-label="최근 앱"><svg width="40" height="42" viewBox="0 0 40 42"><path d="M3 3v36M20 3v36M37 3v36" stroke="#8e8e8e" stroke-width="4" stroke-linecap="round"/></svg></button>
  <button aria-label="홈"><svg width="42" height="42" viewBox="0 0 42 42"><rect x="2" y="2" width="38" height="38" rx="11" fill="none" stroke="#8e8e8e" stroke-width="4"/></svg></button>
  <button aria-label="뒤로 가기"><svg width="24" height="44" viewBox="0 0 24 44"><path d="M22 2L2 22l20 20" fill="none" stroke="#8e8e8e" stroke-width="4" stroke-linecap="round"/></svg></button>
</nav>
</body>
</html>
```
FILE: styles.css
```css
* { box-sizing: border-box; }
body { margin: 0; background: #f6f6f6; color: #222; font-family: Roboto, "Noto Sans CJK KR", sans-serif; }
p, h1 { margin: 0; }
button { border: 0; padding: 0; background: none; font: inherit; color: inherit; cursor: pointer; }
svg { display: block; flex: none; }
.defs { position: absolute; }

.statusbar { display: flex; justify-content: space-between; align-items: center; height: 80px; padding: 0 32px; font-size: 39px; color: #474747; }
.status-group { display: flex; align-items: center; }
.status-left { gap: 17px; }
.more-dot { margin-left: 8px; }
.status-right { gap: 7px; }
.hd, .voice { font-family: Roboto, sans-serif; font-weight: 700; text-anchor: middle; }
.hd { font-size: 16px; fill: #f6f6f6; }
.voice { font-size: 13px; fill: #474747; }

.appbar { display: flex; align-items: center; height: 96px; margin-top: 65px; padding: 0 82px 0 68px; }
.appbar h1 { flex: 1; padding-top: 5px; font-size: 42px; font-weight: 500; line-height: 60px; color: #000; }
.icon-btn { display: block; }
.icon-btn.back { margin-right: 52px; }
.icon-btn + .icon-btn { margin-left: 70px; }

.summary { display: flex; justify-content: space-between; align-items: center; padding: 77px 53px 36px 63px; }
.when { padding-top: 4px; font-size: 41px; line-height: 60px; }
.range { color: #6a6a6a; }
.awards { display: flex; align-items: center; gap: 31px; }
.plus { margin-left: -11px; width: 74px; line-height: 48px; border-radius: 24px; background: #ff5a00; color: #fff; font-size: 28px; text-align: center; }

.totals { padding: 116px 0 133px; border-radius: 72px 72px 0 0; background: #fdfdfd; text-align: center; font-weight: 500; }
.unit { line-height: 1; }
.distance { font-size: 84px; line-height: 108px; }
.distance .unit { margin-left: 9px; font-size: 36px; }
.pace { display: flex; justify-content: center; align-items: center; font-size: 48px; line-height: 62px; }
.speed { margin-left: 20px; padding-left: 20px; background: linear-gradient(#e4e4e4, #e4e4e4) left center / 1px 38px no-repeat; }
.pace .unit { margin-left: 7px; font-size: 32px; }

.map { position: relative; overflow: hidden; border-radius: 0 0 72px 72px; }
.map-art { width: 100%; height: auto; }
.tile { overflow: visible; }
.street { fill: none; stroke: #fff; stroke-width: 8px; stroke-linejoin: round; }
#thin, #thick { fill: none; stroke-linejoin: round; stroke-linecap: round; }
.place { fill: #202124; stroke: #fff; stroke-width: 5px; stroke-linejoin: round; paint-order: stroke; font-family: "Noto Sans CJK KR", sans-serif; }
.park { fill: #1e8547; stroke: #e0f2e4; }
.shield { font-family: "Noto Sans", sans-serif; font-size: 24px; font-weight: 600; fill: #fff; text-anchor: middle; }
.shield rect { fill: #3a76c4; }
.shield .on-hex { fill: #4c4c4c; font-weight: 400; }
.marker { fill: #009e54; font-size: 24px; font-weight: 700; text-anchor: middle; }
.marker text { fill: #fff; }
.marker .fast { fill: #dc1900; }
.google { font-family: Lato, sans-serif; font-size: 45px; font-weight: 700; stroke: #fff; stroke-width: 3px; paint-order: stroke; }
.legend { position: absolute; left: 21px; top: 16px; color: #000; }
.weather { display: flex; align-items: center; gap: 24px; padding-left: 6px; font-size: 39px; line-height: 52px; }
.fastest { display: flex; align-items: center; gap: 18px; margin-top: 36px; font-size: 32px; line-height: 48px; font-weight: 500; }
.swatch { width: 36px; height: 13px; border: 2px solid #5a4848; border-radius: 7px; background: #dc1900; }
.map-tools { position: absolute; top: 18px; right: 17px; display: grid; gap: 17px; }
.map-tools button { display: grid; place-items: center; width: 99px; height: 99px; border-radius: 50%; background: #fff; }

.charts { margin-top: 53px; padding-top: 68px; border-radius: 72px 72px 0 0; background: #fdfdfd; }
.chips { display: flex; gap: 26px; padding: 0 74px; }
.chip { padding: 0 46px; border-radius: 41px; font-size: 30px; line-height: 82px; font-weight: 700; }
.speed-chip { background: #f3f8fd; color: #84bdea; }
.alt-chip { background: #effdf8; color: #44d69b; }
.hr-chip { background: #fcf5f4; color: #f18a75; }
.plot { position: relative; margin-top: 31px; }
.plot-art { width: 100%; height: auto; overflow: hidden; }
.dots { fill: none; stroke: #bbb; stroke-width: 2px; stroke-dasharray: 2 6; }
.speed-line { fill: #7dd3f855; stroke: #8ed6f4; stroke-width: 4px; stroke-linejoin: round; }
.alt-area { fill: #4ae08a38; }
.alt-line { fill: none; stroke: #67e0a0; stroke-width: 4px; }
.hr-line { fill: none; stroke: url(#zones); stroke-width: 15px; stroke-linejoin: round; }
.axis { fill: #b5b5b5; font-size: 26px; }
.axis .end { text-anchor: end; }
.tooltip { position: absolute; left: 405px; top: 0; display: flex; gap: 22px; padding: 2px 42px 0; border-radius: 42px; background: #242424; color: #fff; font-size: 29px; line-height: 82px; white-space: nowrap; }
.tooltip::after { content: ""; position: absolute; left: 236px; top: 84px; border: 12px solid transparent; border-top: 16px solid #242424; border-bottom: 0; }
.tooltip span { display: flex; align-items: center; gap: 7px; }
.tooltip span::before { content: ""; width: 17px; height: 17px; border-radius: 50%; background: #7cc4ff; }
.tooltip .tip-alt::before { background: #35e39a; }
.tooltip .tip-hr::before { background: #ff8670; }

.navbar { display: flex; height: 126px; padding: 0 86px 0 89px; background: #f6f6f6; }
.navbar button { flex: 1; display: grid; place-items: center; padding-top: 6px; }
```
